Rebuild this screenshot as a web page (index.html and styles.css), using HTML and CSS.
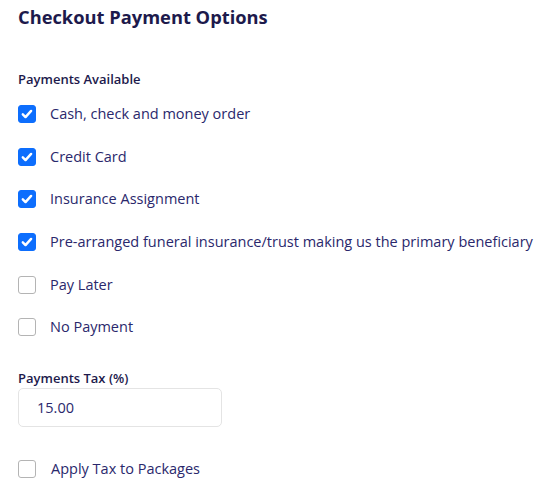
FILE: index.html
```html
<!DOCTYPE html>
<html>
<head>
<meta charset="utf-8">
<link rel="stylesheet" href="styles.css">
</head>
<body>
<div class="page">
  <h1 class="title">Checkout Payment Options</h1>
  <div class="section-label">Payments Available</div>
  <div class="options">
    <label class="opt"><span class="box checked"><svg viewBox="0 0 16 16" width="14" height="14"><path d="M3.2 8.4l3.1 3.1 6.4-7" fill="none" stroke="#fff" stroke-width="2.8" stroke-linecap="round" stroke-linejoin="round"/></svg></span><span class="txt">Cash, check and money order</span></label>
    <label class="opt"><span class="box checked"><svg viewBox="0 0 16 16" width="14" height="14"><path d="M3.2 8.4l3.1 3.1 6.4-7" fill="none" stroke="#fff" stroke-width="2.8" stroke-linecap="round" stroke-linejoin="round"/></svg></span><span class="txt">Credit Card</span></label>
    <label class="opt"><span class="box checked"><svg viewBox="0 0 16 16" width="14" height="14"><path d="M3.2 8.4l3.1 3.1 6.4-7" fill="none" stroke="#fff" stroke-width="2.8" stroke-linecap="round" stroke-linejoin="round"/></svg></span><span class="txt">Insurance Assignment</span></label>
    <label class="opt"><span class="box checked"><svg viewBox="0 0 16 16" width="14" height="14"><path d="M3.2 8.4l3.1 3.1 6.4-7" fill="none" stroke="#fff" stroke-width="2.8" stroke-linecap="round" stroke-linejoin="round"/></svg></span><span class="txt">Pre-arranged funeral insurance/trust making us the primary beneficiary</span></label>
    <label class="opt"><span class="box"></span><span class="txt">Pay Later</span></label>
    <label class="opt"><span class="box"></span><span class="txt">No Payment</span></label>
  </div>
  <div class="section-label tax-label">Payments Tax (%)</div>
  <div class="input">15.00</div>
  <label class="opt apply"><span class="box"></span><span class="txt">Apply Tax to Packages</span></label>
</div>
</body>
</html>
```
FILE: styles.css
```css
html, body { margin: 0; padding: 0; background: #fff; }
body { font-family: "Open Sans", "Noto Sans", sans-serif; color: #2c2a6b; }
.page { padding: 4px 18px 0 18px; }
.title { margin: 0; font-size: 18.3px; font-weight: 700; color: #1d1a4c; line-height: 25px; }
.section-label { font-size: 13px; font-weight: 600; color: #1d1a4c; margin-top: 41px; line-height: 18px; }
.options { display: flex; flex-direction: column; gap: 24.7px; margin-top: 17px; }
.opt { display: flex; align-items: center; gap: 14px; height: 18px; }
.box { width: 18px; height: 18px; box-sizing: border-box; border: 1.5px solid #b4b4b4; border-radius: 3px; display: flex; align-items: center; justify-content: center; flex: none; background: #fff; }
.box.checked { background: #0d6efd; border-color: #0d6efd; }
.txt { font-size: 14.5px; line-height: 18px; white-space: nowrap; color: #2a286c; }
.tax-label { margin-top: 33px; }
.input { margin-top: 1px; width: 204px; height: 39px; box-sizing: border-box; border: 1px solid #e4e4e4; border-radius: 5px; padding-left: 18px; display: flex; align-items: center; font-size: 14.5px; color: #2a286c; }
.apply { margin-top: 33px; }
.apply .txt { margin-left: 1px; }
```
